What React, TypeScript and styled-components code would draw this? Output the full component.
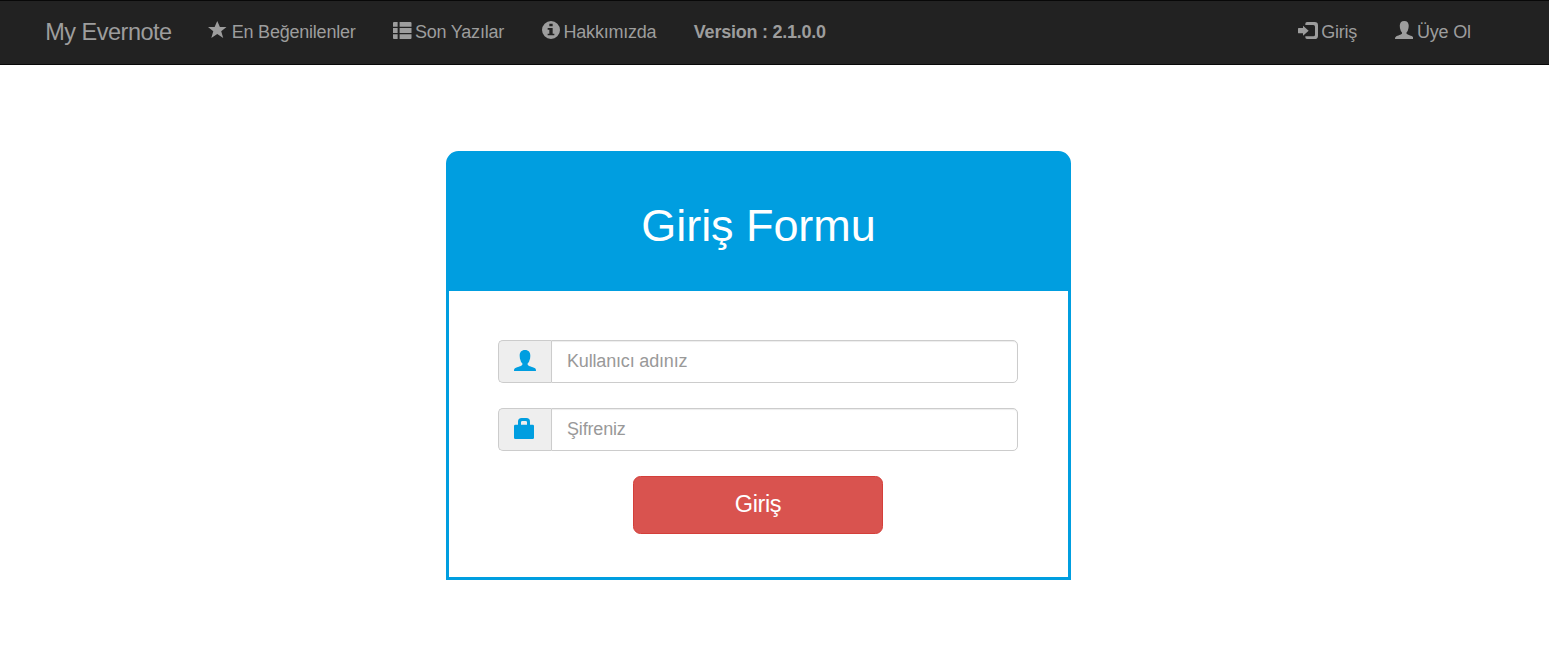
import React from "react";
import styled, { createGlobalStyle } from "styled-components";

const GlobalStyle = createGlobalStyle`
  * { box-sizing: border-box; }
  body {
    margin: 0;
    background: #fff;
    color: #333;
    font: 18px/25px "Liberation Sans", Arial, sans-serif;
    letter-spacing: -0.22px;
  }
`;

const Navbar = styled.nav`
  display: flex;
  align-items: stretch;
  height: 65px;
  padding: 0 59.5px 0 26.5px;
  background: #222;
  border: solid #080808;
  border-width: 1px 0;
  color: #9d9d9d;
`;

const Brand = styled.a`
  width: 163px;
  padding: 19px 0 0 18.75px;
  font-size: 23.5px;
  letter-spacing: -0.5px;
  white-space: nowrap;
`;

const NavList = styled.ul<{ $end?: boolean }>`
  display: flex;
  margin: 0;
  margin-left: ${(p) => (p.$end ? "auto" : "0")};
  padding: 0;
  list-style: none;
`;

const NavItem = styled.li<{ $strong?: boolean }>`
  display: flex;
  padding: 18.75px 18.75px 0;
  font-weight: ${(p) => (p.$strong ? 700 : 400)};
  letter-spacing: ${(p) => (p.$strong ? "-0.25px" : "inherit")};
  white-space: nowrap;
`;

const Glyph = styled.svg<{ $w: number; $h: number; $top?: number }>`
  display: block;
  flex: none;
  width: ${(p) => p.$w}px;
  height: ${(p) => p.$h}px;
  margin-top: ${(p) => p.$top ?? 0}px;
  fill: currentColor;
`;

const NavGlyph = styled(Glyph)<{ $gap: number }>`
  margin-right: ${(p) => p.$gap}px;
`;

const Card = styled.section`
  width: 625px;
  height: 429px;
  margin: 86px 0 0 446px;
  border: 3px solid #009ee0;
  border-radius: 12.5px 12.5px 0 0;
  background: #009ee0;
`;

const CardHeader = styled.header`
  height: 137px;
  padding-top: 47px;
  text-align: center;
`;

const Title = styled.h1`
  margin: 0;
  color: #fff;
  font-size: 45px;
  font-weight: 400;
  line-height: 50px;
  letter-spacing: -0.06px;
`;

const Form = styled.form`
  display: flex;
  flex-direction: column;
  gap: 25px;
  height: 286px;
  padding: 49px 50px 0 49px;
  background: #fff;
`;

const Field = styled.label`
  display: flex;
  height: 43px;
`;

const Addon = styled.span`
  display: flex;
  width: 53px;
  padding: 9px 0 0 15px;
  background: #eee;
  border: 1px solid #ccc;
  border-right: 0;
  border-radius: 5px 0 0 5px;
  color: #009ee0;
`;

const Input = styled.input`
  flex: 1;
  min-width: 0;
  padding: 0 15px;
  border: 1px solid #ccc;
  border-radius: 0 5px 5px 0;
  background: #fff;
  box-shadow: inset 0 1px 1px rgba(0, 0, 0, 0.075);
  color: #555;
  font: inherit;
  letter-spacing: -0.17px;
  outline: 0;
  &::placeholder {
    color: #999;
    opacity: 1;
  }
`;

const Submit = styled.button`
  align-self: center;
  width: 250px;
  height: 58px;
  padding: 0 0 2px;
  background: #d9534f;
  border: 1px solid #d43f3a;
  border-radius: 7.5px;
  color: #fff;
  font: 23.5px/30px "Liberation Sans", Arial, sans-serif;
  letter-spacing: -0.4px;
`;

const userPath =
  "M33 0C22 0 17 7 17 17c0 6 1 11 3 15 1 4 3 6 5 8v4C23 48 9 51 4 54c-3 2-4 4-4 9h66c0-5-1-7-4-9-5-3-19-6-21-10v-4c2-2 4-4 5-8 2-4 3-9 3-15C49 7 44 0 33 0Z";

export default function App() {
  return (
    <>
      <GlobalStyle />
      <Navbar>
        <Brand>My Evernote</Brand>
        <NavList>
          <NavItem>
            <NavGlyph $w={18.5} $h={17} $top={1.5} $gap={5} viewBox="0 0 56 51" preserveAspectRatio="none">
              <path d="M28 0l8 18h20L40 31l6 20-18-12-18 12 6-20L0 18h20z" />
            </NavGlyph>
            En Beğenilenler
          </NavItem>
          <NavItem>
            <NavGlyph $w={18.5} $h={17} $top={2.25} $gap={3.5} viewBox="0 0 56 51">
              <path d="M3 0h11v14H0V3a3 3 0 0 1 3-3zM20 0h33a3 3 0 0 1 3 3v11H20zM0 18h14v15H0zM20 18h36v15H20zM0 37h14v14H3a3 3 0 0 1-3-3zM20 37h36v11a3 3 0 0 1-3 3H20z" />
            </NavGlyph>
            Son Yazılar
          </NavItem>
          <NavItem>
            <NavGlyph $w={18} $h={18} $top={1.25} $gap={4} viewBox="0 0 54 54">
              <path fillRule="evenodd" d="M27 0a27 27 0 1 1 0 54 27 27 0 0 1 0-54zM22 8v8h10V8zM17 21v5h5v12h-5v5h20v-5h-5V21z" />
            </NavGlyph>
            Hakkımızda
          </NavItem>
          <NavItem $strong>Version : 2.1.0.0</NavItem>
        </NavList>
        <NavList $end>
          <NavItem>
            <NavGlyph $w={20} $h={17} $top={2.25} $gap={3} viewBox="0 0 60 51">
              <path d="M0 20q0-2 2-2h13v-7l17 15-17 15v-7H2q-2 0-2-2zM22 5q0-5 5-5h23q10 0 10 10v31q0 10-10 10H27q-5 0-5-5v-3h24q5 0 5-5V14q0-5-5-5H22z" />
            </NavGlyph>
            Giriş
          </NavItem>
          <NavItem>
            <NavGlyph $w={18.5} $h={18} $top={1.25} $gap={4} viewBox="0 0 66 63" preserveAspectRatio="none">
              <path d={userPath} />
            </NavGlyph>
            Üye Ol
          </NavItem>
        </NavList>
      </Navbar>
      <Card>
        <CardHeader>
          <Title>Giriş Formu</Title>
        </CardHeader>
        <Form onSubmit={(e) => e.preventDefault()}>
          <Field>
            <Addon>
              <Glyph $w={22} $h={21} viewBox="0 0 66 63">
                <path d={userPath} />
              </Glyph>
            </Addon>
            <Input type="text" placeholder="Kullanıcı adınız" />
          </Field>
          <Field>
            <Addon>
              <Glyph $w={20} $h={21} viewBox="0 0 60 63">
                <path fillRule="evenodd" d="M4 20h8v-9Q12 0 23 0h14q11 0 11 11v9h8q4 0 4 4v35q0 4-4 4H4q-4 0-4-4V24q0-4 4-4zm17 0h18v-7q0-4-4-4H25q-4 0-4 4z" />
              </Glyph>
            </Addon>
            <Input type="password" placeholder="Şifreniz" />
          </Field>
          <Submit type="submit">Giriş</Submit>
        </Form>
      </Card>
    </>
  );
}
